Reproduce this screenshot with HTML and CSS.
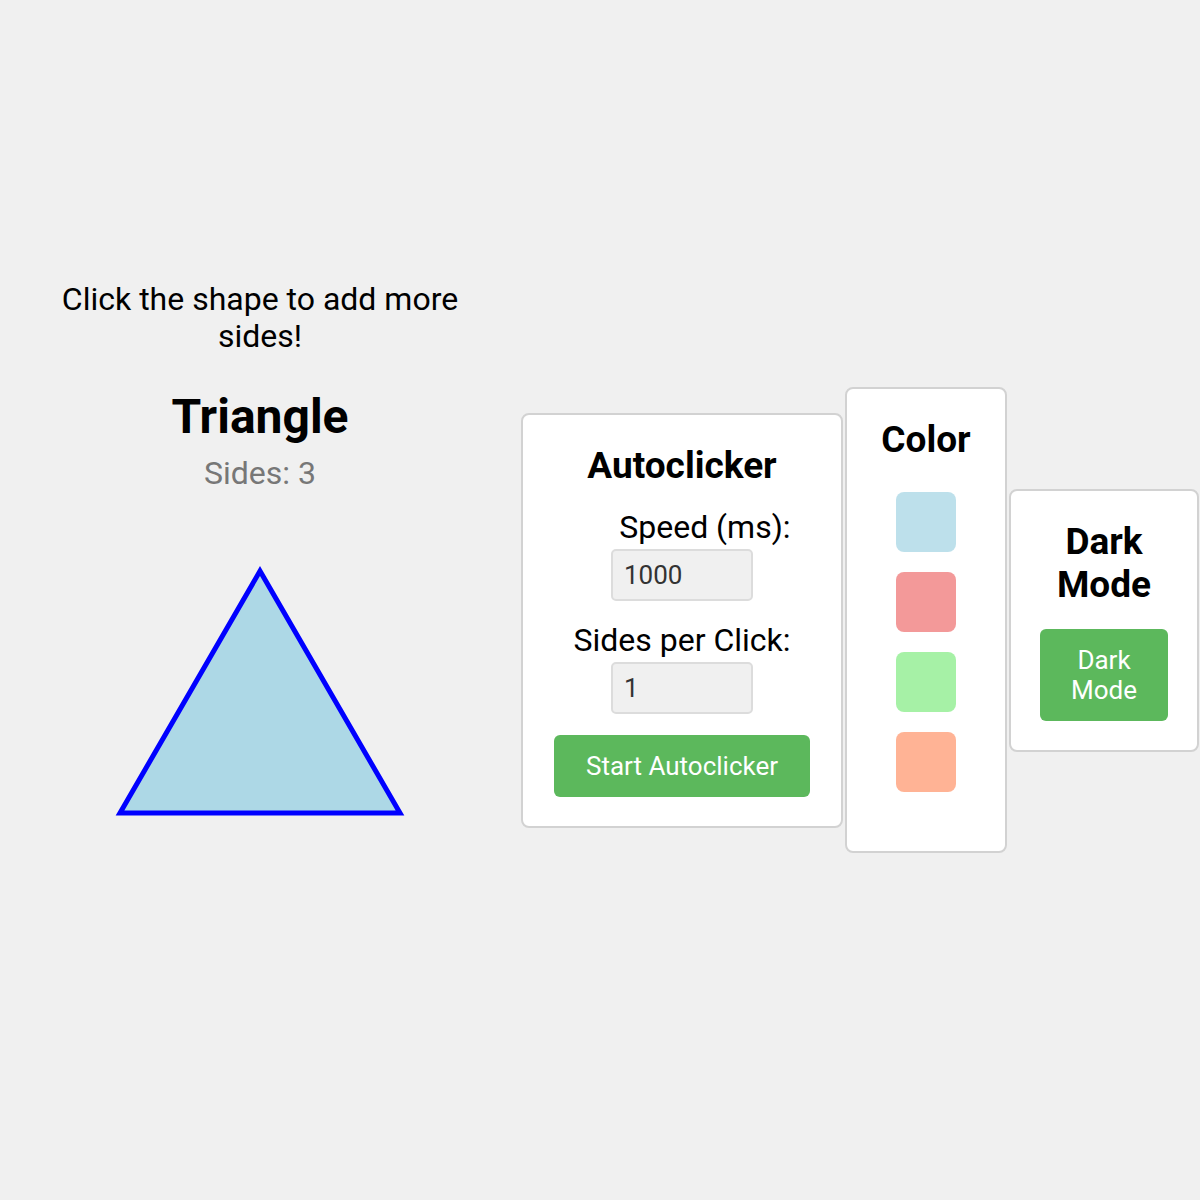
FILE: index.html
```html
<!DOCTYPE html>
<html lang="en">
<head>
  <meta charset="UTF-8" />
  <meta name="viewport" content="width=device-width, initial-scale=1.0"/>
  <title>Shape Clicker</title>
  <link rel="stylesheet" href="styles.css">
</head>
<body>
  <div class="game">
    <div class="shape-area">
      <p class="hint">Click the shape to add more sides!</p>
      <h2 class="shape-name">Triangle</h2>
      <div class="side-count">Sides: 3</div>
      <svg class="shape" width="300" height="260" viewBox="0 0 300 260">
        <polygon points="150,13 10,255 290,255" fill="#add8e6" stroke="#0000ff" stroke-width="5"/>
      </svg>
    </div>

    <div class="panels">
      <div class="card autoclicker">
        <h3>Autoclicker</h3>
        <div class="fields">
          <label for="speed">Speed (ms):</label>
          <input id="speed" type="text" value="1000" />
          <label for="perClick">Sides per Click:</label>
          <input id="perClick" type="text" value="1" />
        </div>
        <button class="btn wide">Start Autoclicker</button>
      </div>

      <div class="card colors">
        <h3>Color</h3>
        <div class="swatches">
          <div class="swatch blue"></div>
          <div class="swatch red"></div>
          <div class="swatch green"></div>
          <div class="swatch salmon"></div>
        </div>
      </div>

      <div class="card dark">
        <h3>Dark Mode</h3>
        <button class="btn">Dark Mode</button>
      </div>
    </div>
  </div>
</body>
</html>
```

FILE: styles.css
```css
* {
  box-sizing: border-box;
}

body {
  margin: 0;
  font-family: Roboto, "Liberation Sans", sans-serif;
  background-color: #f0f0f0;
  color: #000;
}

.game {
  display: flex;
  align-items: flex-start;
  gap: 61px;
  padding: 281px 0 0 60px;
  min-height: 1200px;
}

.shape-area {
  width: 400px;
  display: flex;
  flex-direction: column;
  align-items: center;
  text-align: center;
}

.hint {
  margin: 0;
  font-size: 32px;
  line-height: 37px;
}

.shape-name {
  margin: 34px 0 0;
  font-size: 48px;
  line-height: 56px;
  font-weight: bold;
}

.side-count {
  margin-top: 10px;
  font-size: 32px;
  line-height: 37px;
  color: #777;
}

.shape {
  display: block;
  margin-top: 66px;
  cursor: pointer;
}

.panels {
  display: flex;
  align-items: center;
  gap: 2px;
  margin-top: 106px;
}

.card {
  background: #fff;
  border: 2px solid #d2d2d2;
  border-radius: 8px;
  padding: 29px;
  text-align: center;
}

.card h3 {
  margin: 0;
  font-size: 37px;
  line-height: 43px;
  font-weight: bold;
}

.autoclicker { width: 322px; }
.colors { width: 162px; }
.dark { width: 190px; }

.fields {
  width: fit-content;
  margin: 22px auto 0;
  text-align: right;
}

.fields label {
  display: block;
  font-size: 32px;
  line-height: 37px;
}

.fields input {
  display: block;
  width: 142px;
  height: 52px;
  margin: 3px auto 21px;
  padding: 0 11px;
  font-family: inherit;
  font-size: 26px;
  color: #333;
  background: #f0f0f0;
  border: 2px solid #dcdcdc;
  border-radius: 5px;
}

.btn {
  display: block;
  margin: 0 auto;
  padding: 16px 30px;
  font-family: inherit;
  font-size: 26px;
  line-height: 30px;
  color: #fff;
  background-color: #5cb85c;
  border: none;
  border-radius: 6px;
  cursor: pointer;
}

.btn.wide {
  width: 256px;
  padding: 16px 0;
}

.dark .btn {
  width: 100%;
  margin-top: 23px;
}

.swatches {
  display: flex;
  flex-direction: column;
  align-items: center;
  gap: 20px;
  margin: 31px 0 30px;
}

.swatch {
  width: 60px;
  height: 60px;
  border-radius: 8px;
  opacity: 0.8;
  cursor: pointer;
}

.blue { background: #add8e6; }
.red { background: #f08080; }
.green { background: #90ee90; }
.salmon { background: #ffa07a; }
```
